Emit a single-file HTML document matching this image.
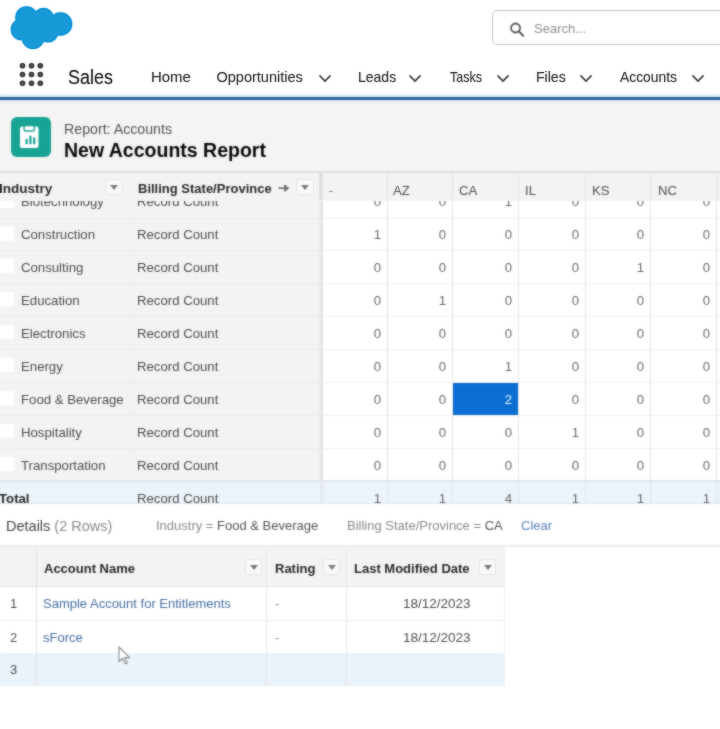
<!DOCTYPE html>
<html><head><meta charset="utf-8">
<style>
*{box-sizing:border-box;margin:0;padding:0}
html,body{width:720px;height:729px;overflow:hidden;background:#fff;font-family:"Liberation Sans",sans-serif;color:#444}
#root{will-change:transform;position:absolute;left:0;top:0;width:720px;height:729px;overflow:hidden}
.abs{position:absolute}
.navi{position:absolute;top:69px;font-size:14.5px;color:#4a4a4a;white-space:nowrap}
.chev{position:absolute;top:73.5px;width:14px;height:9px}
.cell{position:absolute;white-space:nowrap;font-size:13.2px;color:#4e4e4e}
.num{position:absolute;font-size:13.2px;color:#686868;text-align:right}
.hb{font-weight:bold;color:#2a2a2a}
.ddb{position:absolute;border:1px solid #e3e3e3;border-radius:3px;background:#f9f9f9}
.ddb:after{content:"";position:absolute;left:3.5px;top:4.5px;border-left:4.5px solid transparent;border-right:4.5px solid transparent;border-top:5.5px solid #7a7a7a}
</style></head><body><div id="root">
<svg class="abs" style="left:0;top:0" width="80" height="56" viewBox="0 0 80 56">
  <g fill="#1899d8">
    <circle cx="26.5" cy="17.5" r="11.3"/><circle cx="43.5" cy="18" r="10.3"/><circle cx="60.5" cy="24" r="11.8"/>
    <circle cx="21.5" cy="29.5" r="10.8"/><circle cx="33" cy="37.5" r="11.5"/><circle cx="48" cy="32" r="10.5"/><circle cx="40" cy="28" r="14"/>
  </g></svg>
<div class="abs" style="left:492px;top:10px;width:240px;height:35px;border:1.5px solid #cfcfcf;border-radius:5px;background:#fff"></div>
<svg class="abs" style="left:509px;top:22px" width="17" height="16" viewBox="0 0 17 16"><circle cx="6.6" cy="6" r="4.5" fill="none" stroke="#555" stroke-width="1.8"/><line x1="9.9" y1="9.4" x2="14.2" y2="13.8" stroke="#555" stroke-width="2" stroke-linecap="round"/></svg>
<div class="abs" style="left:534px;top:21px;font-size:13px;color:#8f8f8f">Search...</div>
<svg class="abs" style="left:18px;top:61px" width="28" height="28" viewBox="0 0 28 28"><g fill="#4d4d4d"><circle cx="4.5" cy="4.8" r="2.75"/><circle cx="13.5" cy="4.8" r="2.75"/><circle cx="22.3" cy="4.8" r="2.75"/><circle cx="4.5" cy="13.5" r="2.75"/><circle cx="13.5" cy="13.5" r="2.75"/><circle cx="22.3" cy="13.5" r="2.75"/><circle cx="4.5" cy="22.3" r="2.75"/><circle cx="13.5" cy="22.3" r="2.75"/><circle cx="22.3" cy="22.3" r="2.75"/></g></svg>
<div class="abs" style="left:67.5px;top:66px;font-size:19.5px;color:#383838;transform:scaleX(0.92);transform-origin:0 0">Sales</div>

<div class="navi" style="left:151px;transform:scaleX(1.03);transform-origin:0 0">Home</div>
<div class="navi" style="left:216.5px;transform:scaleX(1.0);transform-origin:0 0">Opportunities</div>
<div class="navi" style="left:357.5px;transform:scaleX(0.965);transform-origin:0 0">Leads</div>
<div class="navi" style="left:449.5px;transform:scaleX(0.86);transform-origin:0 0">Tasks</div>
<div class="navi" style="left:536px;transform:scaleX(0.97);transform-origin:0 0">Files</div>
<div class="navi" style="left:620px;transform:scaleX(0.955);transform-origin:0 0">Accounts</div>
<svg class="chev" style="left:318px" viewBox="0 0 14 9"><path d="M1.5 1.5 L7 7 L12.5 1.5" fill="none" stroke="#5a5a5a" stroke-width="1.6"/></svg>
<svg class="chev" style="left:408px" viewBox="0 0 14 9"><path d="M1.5 1.5 L7 7 L12.5 1.5" fill="none" stroke="#5a5a5a" stroke-width="1.6"/></svg>
<svg class="chev" style="left:496px" viewBox="0 0 14 9"><path d="M1.5 1.5 L7 7 L12.5 1.5" fill="none" stroke="#5a5a5a" stroke-width="1.6"/></svg>
<svg class="chev" style="left:579px" viewBox="0 0 14 9"><path d="M1.5 1.5 L7 7 L12.5 1.5" fill="none" stroke="#5a5a5a" stroke-width="1.6"/></svg>
<svg class="chev" style="left:691px" viewBox="0 0 14 9"><path d="M1.5 1.5 L7 7 L12.5 1.5" fill="none" stroke="#5a5a5a" stroke-width="1.6"/></svg>
<div class="abs" style="left:0;top:94px;width:720px;height:3px;background:linear-gradient(#f4fbfd,#cfe9f5)"></div>
<div class="abs" style="left:0;top:97px;width:720px;height:3px;background:#2c659c"></div>
<div class="abs" style="left:0;top:100px;width:720px;height:71px;background:#f4f4f4">
  <div class="abs" style="left:0;top:0;width:720px;height:2px;background:linear-gradient(#d8e6f4,#eef0f2)"></div>
  <div class="abs" style="left:11px;top:17px;width:40px;height:40px;border-radius:6px;background:#18a394"></div>
  <svg class="abs" style="left:11px;top:17px" width="40" height="40" viewBox="0 0 40 40">
    <rect x="9" y="9.5" width="18.5" height="21.5" rx="2" fill="#fff"/>
    <rect x="13" y="8.5" width="10.5" height="5.5" rx="2" fill="#fff" stroke="#18a394" stroke-width="1.3"/>
    <rect x="14.5" y="22" width="2.2" height="5.3" fill="#18a394"/>
    <rect x="18.3" y="18.7" width="2.2" height="8.6" fill="#18a394"/>
    <rect x="22.1" y="20.5" width="2.2" height="6.8" fill="#18a394"/>
  </svg>
  <div class="abs" style="left:64px;top:21px;font-size:14.2px;color:#555;white-space:nowrap">Report: Accounts</div>
  <div class="abs" style="left:64px;top:39px;font-size:19.5px;font-weight:bold;color:#080808;white-space:nowrap">New Accounts Report</div>
</div>

<div class="abs" style="left:0;top:171px;width:720px;height:333px;background:#fff">
<div class="abs" style="left:0;top:0;width:720px;height:2px;background:#e0e0e0"></div>
<div class="abs" style="left:0;top:30px;width:720px;height:303px;overflow:hidden">
<div class="abs" style="left:0;top:0;width:321px;height:304px;background:#f3f3f3"></div>
<div class="abs" style="left:0;top:17px;width:321px;height:1px;background:#eaeaea"></div>
<div class="abs" style="left:322px;top:17px;width:398px;height:1px;background:#f0f0f0"></div>
<div class="abs" style="left:0;top:-7px;width:14px;height:14px;background:#fff"></div>
<div class="cell" style="left:21px;top:-6.75px">Biotechnology</div>
<div class="cell" style="left:137px;top:-6.75px">Record Count</div>
<div class="num" style="left:322px;width:59px;top:-6.75px">0</div>
<div class="num" style="left:387px;width:59px;top:-6.75px">0</div>
<div class="num" style="left:452px;width:60px;top:-6.75px">1</div>
<div class="num" style="left:518px;width:61px;top:-6.75px">0</div>
<div class="num" style="left:585px;width:59px;top:-6.75px">0</div>
<div class="num" style="left:650px;width:60px;top:-6.75px">0</div>
<div class="abs" style="left:0;top:49px;width:321px;height:1px;background:#eaeaea"></div>
<div class="abs" style="left:322px;top:49px;width:398px;height:1px;background:#f0f0f0"></div>
<div class="abs" style="left:0;top:26px;width:14px;height:14px;background:#fff"></div>
<div class="cell" style="left:21px;top:26.0px">Construction</div>
<div class="cell" style="left:137px;top:26.0px">Record Count</div>
<div class="num" style="left:322px;width:59px;top:26.0px">1</div>
<div class="num" style="left:387px;width:59px;top:26.0px">0</div>
<div class="num" style="left:452px;width:60px;top:26.0px">0</div>
<div class="num" style="left:518px;width:61px;top:26.0px">0</div>
<div class="num" style="left:585px;width:59px;top:26.0px">0</div>
<div class="num" style="left:650px;width:60px;top:26.0px">0</div>
<div class="abs" style="left:0;top:82px;width:321px;height:1px;background:#eaeaea"></div>
<div class="abs" style="left:322px;top:82px;width:398px;height:1px;background:#f0f0f0"></div>
<div class="abs" style="left:0;top:58px;width:14px;height:14px;background:#fff"></div>
<div class="cell" style="left:21px;top:58.5px">Consulting</div>
<div class="cell" style="left:137px;top:58.5px">Record Count</div>
<div class="num" style="left:322px;width:59px;top:58.5px">0</div>
<div class="num" style="left:387px;width:59px;top:58.5px">0</div>
<div class="num" style="left:452px;width:60px;top:58.5px">0</div>
<div class="num" style="left:518px;width:61px;top:58.5px">0</div>
<div class="num" style="left:585px;width:59px;top:58.5px">1</div>
<div class="num" style="left:650px;width:60px;top:58.5px">0</div>
<div class="abs" style="left:0;top:115px;width:321px;height:1px;background:#eaeaea"></div>
<div class="abs" style="left:322px;top:115px;width:398px;height:1px;background:#f0f0f0"></div>
<div class="abs" style="left:0;top:91px;width:14px;height:14px;background:#fff"></div>
<div class="cell" style="left:21px;top:91.5px">Education</div>
<div class="cell" style="left:137px;top:91.5px">Record Count</div>
<div class="num" style="left:322px;width:59px;top:91.5px">0</div>
<div class="num" style="left:387px;width:59px;top:91.5px">1</div>
<div class="num" style="left:452px;width:60px;top:91.5px">0</div>
<div class="num" style="left:518px;width:61px;top:91.5px">0</div>
<div class="num" style="left:585px;width:59px;top:91.5px">0</div>
<div class="num" style="left:650px;width:60px;top:91.5px">0</div>
<div class="abs" style="left:0;top:148px;width:321px;height:1px;background:#eaeaea"></div>
<div class="abs" style="left:322px;top:148px;width:398px;height:1px;background:#f0f0f0"></div>
<div class="abs" style="left:0;top:124px;width:14px;height:14px;background:#fff"></div>
<div class="cell" style="left:21px;top:124.5px">Electronics</div>
<div class="cell" style="left:137px;top:124.5px">Record Count</div>
<div class="num" style="left:322px;width:59px;top:124.5px">0</div>
<div class="num" style="left:387px;width:59px;top:124.5px">0</div>
<div class="num" style="left:452px;width:60px;top:124.5px">0</div>
<div class="num" style="left:518px;width:61px;top:124.5px">0</div>
<div class="num" style="left:585px;width:59px;top:124.5px">0</div>
<div class="num" style="left:650px;width:60px;top:124.5px">0</div>
<div class="abs" style="left:0;top:181px;width:321px;height:1px;background:#eaeaea"></div>
<div class="abs" style="left:322px;top:181px;width:398px;height:1px;background:#f0f0f0"></div>
<div class="abs" style="left:0;top:157px;width:14px;height:14px;background:#fff"></div>
<div class="cell" style="left:21px;top:157.5px">Energy</div>
<div class="cell" style="left:137px;top:157.5px">Record Count</div>
<div class="num" style="left:322px;width:59px;top:157.5px">0</div>
<div class="num" style="left:387px;width:59px;top:157.5px">0</div>
<div class="num" style="left:452px;width:60px;top:157.5px">1</div>
<div class="num" style="left:518px;width:61px;top:157.5px">0</div>
<div class="num" style="left:585px;width:59px;top:157.5px">0</div>
<div class="num" style="left:650px;width:60px;top:157.5px">0</div>
<div class="abs" style="left:0;top:214px;width:321px;height:1px;background:#eaeaea"></div>
<div class="abs" style="left:322px;top:214px;width:398px;height:1px;background:#f0f0f0"></div>
<div class="abs" style="left:0;top:190px;width:14px;height:14px;background:#fff"></div>
<div class="cell" style="left:21px;top:190.5px">Food &amp; Beverage</div>
<div class="cell" style="left:137px;top:190.5px">Record Count</div>
<div class="num" style="left:322px;width:59px;top:190.5px">0</div>
<div class="num" style="left:387px;width:59px;top:190.5px">0</div>
<div class="abs" style="left:453px;top:182px;width:65px;height:32px;background:#0b6fd3"></div>
<div class="num" style="left:452px;width:60px;top:190.5px;color:#e6f2ff">2</div>
<div class="num" style="left:518px;width:61px;top:190.5px">0</div>
<div class="num" style="left:585px;width:59px;top:190.5px">0</div>
<div class="num" style="left:650px;width:60px;top:190.5px">0</div>
<div class="abs" style="left:0;top:247px;width:321px;height:1px;background:#eaeaea"></div>
<div class="abs" style="left:322px;top:247px;width:398px;height:1px;background:#f0f0f0"></div>
<div class="abs" style="left:0;top:223px;width:14px;height:14px;background:#fff"></div>
<div class="cell" style="left:21px;top:223.5px">Hospitality</div>
<div class="cell" style="left:137px;top:223.5px">Record Count</div>
<div class="num" style="left:322px;width:59px;top:223.5px">0</div>
<div class="num" style="left:387px;width:59px;top:223.5px">0</div>
<div class="num" style="left:452px;width:60px;top:223.5px">0</div>
<div class="num" style="left:518px;width:61px;top:223.5px">1</div>
<div class="num" style="left:585px;width:59px;top:223.5px">0</div>
<div class="num" style="left:650px;width:60px;top:223.5px">0</div>
<div class="abs" style="left:0;top:280px;width:321px;height:1px;background:#eaeaea"></div>
<div class="abs" style="left:322px;top:280px;width:398px;height:1px;background:#f0f0f0"></div>
<div class="abs" style="left:0;top:256px;width:14px;height:14px;background:#fff"></div>
<div class="cell" style="left:21px;top:256.5px">Transportation</div>
<div class="cell" style="left:137px;top:256.5px">Record Count</div>
<div class="num" style="left:322px;width:59px;top:256.5px">0</div>
<div class="num" style="left:387px;width:59px;top:256.5px">0</div>
<div class="num" style="left:452px;width:60px;top:256.5px">0</div>
<div class="num" style="left:518px;width:61px;top:256.5px">0</div>
<div class="num" style="left:585px;width:59px;top:256.5px">0</div>
<div class="num" style="left:650px;width:60px;top:256.5px">0</div>
<div class="abs" style="left:0;top:279px;width:720px;height:2px;background:#e2e5e8"></div>
<div class="abs" style="left:0;top:281px;width:720px;height:40px;background:#ebf3fb"></div>
<div class="cell hb" style="left:-1px;top:290px">Total</div>
<div class="cell" style="left:137px;top:290px">Record Count</div>
<div class="num" style="left:322px;width:59px;top:290px">1</div>
<div class="num" style="left:387px;width:59px;top:290px">1</div>
<div class="num" style="left:452px;width:60px;top:290px">4</div>
<div class="num" style="left:518px;width:61px;top:290px">1</div>
<div class="num" style="left:585px;width:59px;top:290px">1</div>
<div class="num" style="left:650px;width:60px;top:290px">1</div>
<div class="abs" style="left:322px;top:0;width:1px;height:304px;background:#e3e3e3"></div>
<div class="abs" style="left:387px;top:0;width:1px;height:304px;background:#e3e3e3"></div>
<div class="abs" style="left:452px;top:0;width:1px;height:304px;background:#e3e3e3"></div>
<div class="abs" style="left:518px;top:0;width:1px;height:304px;background:#e3e3e3"></div>
<div class="abs" style="left:585px;top:0;width:1px;height:304px;background:#e3e3e3"></div>
<div class="abs" style="left:650px;top:0;width:1px;height:304px;background:#e3e3e3"></div>
<div class="abs" style="left:716px;top:0;width:1px;height:304px;background:#e3e3e3"></div>
<div class="abs" style="left:130px;top:0;width:1px;height:280px;background:#ececec"></div>
<div class="abs" style="left:319px;top:0;width:3px;height:280px;background:linear-gradient(90deg,#ececec,#e2e2e2)"></div>
<div class="abs" style="left:320px;top:282px;width:1px;height:22px;background:#e0e5ea"></div>
</div>
<div class="abs" style="left:0;top:2px;width:720px;height:28px;background:#f3f3f3"></div>
<div class="cell hb" style="left:-1px;top:10px;font-size:13.5px">Industry</div>
<div class="ddb" style="left:105px;top:8px;width:18px;height:16px"></div>
<div class="cell hb" style="left:138px;top:10px;font-size:13px">Billing State/Province</div>
<svg class="abs" style="left:277px;top:12px" width="14" height="10" viewBox="0 0 14 10"><path d="M1.5 5.2 H9" stroke="#707070" stroke-width="1.7"/><path d="M7.5 1.8 L11.8 5.2 L7.5 8.6 Z" fill="#707070" stroke="#707070" stroke-width="0.8" stroke-linejoin="round"/></svg>
<div class="ddb" style="left:296px;top:8px;width:18px;height:16px"></div>
<div class="cell" style="left:393px;top:11.5px;color:#505050">AZ</div>
<div class="cell" style="left:459px;top:11.5px;color:#505050">CA</div>
<div class="cell" style="left:525px;top:11.5px;color:#505050">IL</div>
<div class="cell" style="left:592px;top:11.5px;color:#505050">KS</div>
<div class="cell" style="left:658px;top:11.5px;color:#505050">NC</div>
<div class="abs" style="left:329px;top:20px;width:4px;height:1px;background:#8a8a8a"></div>
<div class="abs" style="left:322px;top:2px;width:1px;height:27px;background:#e3e3e3"></div>
<div class="abs" style="left:387px;top:2px;width:1px;height:27px;background:#e3e3e3"></div>
<div class="abs" style="left:452px;top:2px;width:1px;height:27px;background:#e3e3e3"></div>
<div class="abs" style="left:518px;top:2px;width:1px;height:27px;background:#e3e3e3"></div>
<div class="abs" style="left:585px;top:2px;width:1px;height:27px;background:#e3e3e3"></div>
<div class="abs" style="left:650px;top:2px;width:1px;height:27px;background:#e3e3e3"></div>
<div class="abs" style="left:716px;top:2px;width:1px;height:27px;background:#e3e3e3"></div>
<div class="abs" style="left:130px;top:2px;width:1px;height:28px;background:#ebebeb"></div>
<div class="abs" style="left:319px;top:2px;width:3px;height:27px;background:#e0e0e0"></div>
</div>
<div class="abs" style="left:0;top:503px;width:720px;height:226px;background:#fff">
  <div class="abs" style="left:0;top:0;width:720px;height:1px;background:#e4e4e4"></div>
  <div class="abs" style="left:6px;top:15px;font-size:14.5px;color:#444;white-space:nowrap">Details <span style="color:#8a8a8a">(2 Rows)</span></div>
  <div class="abs" style="left:156px;top:15px;font-size:13px;color:#8a8a8a;white-space:nowrap">Industry = <span style="color:#555">Food &amp; Beverage</span></div>
  <div class="abs" style="left:347px;top:15px;font-size:13px;color:#8a8a8a;white-space:nowrap">Billing State/Province = <span style="color:#555">CA</span></div>
  <div class="abs" style="left:521px;top:15px;font-size:13px;color:#5a84b8;white-space:nowrap">Clear</div>
  <div class="abs" style="left:0;top:42px;width:720px;height:2px;background:#ececec"></div>
  <div class="abs" style="left:0;top:44px;width:504px;height:39px;background:#f3f3f3"></div>
  <div class="abs" style="left:0;top:83px;width:504px;height:1px;background:#e2e2e2"></div>
  <div class="abs" style="left:0;top:117px;width:504px;height:1px;background:#ededed"></div>
  <div class="abs" style="left:0;top:150px;width:504px;height:33px;background:#eaf2fa"></div>
  <div class="abs" style="left:36px;top:44px;width:1px;height:139px;background:#e2e2e2"></div>
  <div class="abs" style="left:266px;top:44px;width:1px;height:139px;background:#e8e8e8"></div>
  <div class="abs" style="left:346px;top:44px;width:1px;height:139px;background:#e8e8e8"></div>
  <div class="abs" style="left:504px;top:44px;width:1px;height:139px;background:#f0f0f0"></div>
  <div class="cell hb" style="left:44px;top:58px;font-size:13px">Account Name</div>
  <div class="ddb" style="left:245px;top:56px;width:17px;height:16px"></div>
  <div class="cell hb" style="left:275px;top:58px;font-size:13px">Rating</div>
  <div class="ddb" style="left:323px;top:56px;width:17px;height:16px"></div>
  <div class="cell hb" style="left:354px;top:58px;font-size:13px">Last Modified Date</div>
  <div class="ddb" style="left:479px;top:56px;width:17px;height:16px"></div>
  <div class="cell" style="left:10px;top:93px;font-size:13px">1</div>
  <div class="cell" style="left:10px;top:127px;font-size:13px">2</div>
  <div class="cell" style="left:10px;top:159px;font-size:13px">3</div>
  <div class="cell" style="left:43px;top:93px;font-size:13px;color:#4670a3">Sample Account for Entitlements</div>
  <div class="cell" style="left:43px;top:127px;font-size:13px;color:#4670a3">sForce</div>
  <div class="cell" style="left:275px;top:93px;font-size:13px;color:#888">-</div>
  <div class="cell" style="left:275px;top:127px;font-size:13px;color:#888">-</div>
  <div class="cell" style="left:403px;top:93px;font-size:13.5px">18/12/2023</div>
  <div class="cell" style="left:403px;top:127px;font-size:13.5px">18/12/2023</div>
</div>
<svg class="abs" style="left:117px;top:645.5px" width="16" height="22" viewBox="0 0 16 22"><path d="M2 1 L2 15.5 L5.5 12.3 L8.3 18 L10.3 17.1 L7.6 11.6 L12.6 11.6 Z" fill="#fff" stroke="#8a8a8a" stroke-width="1.1" stroke-linejoin="round"/></svg>
</div><div id="root2" style="position:absolute;left:0;top:0;width:720px;height:729px;overflow:hidden;filter:blur(1px);opacity:0.5"><svg class="abs" style="left:0;top:0" width="80" height="56" viewBox="0 0 80 56">
  <g fill="#1899d8">
    <circle cx="26.5" cy="17.5" r="11.3"/><circle cx="43.5" cy="18" r="10.3"/><circle cx="60.5" cy="24" r="11.8"/>
    <circle cx="21.5" cy="29.5" r="10.8"/><circle cx="33" cy="37.5" r="11.5"/><circle cx="48" cy="32" r="10.5"/><circle cx="40" cy="28" r="14"/>
  </g></svg>
<div class="abs" style="left:492px;top:10px;width:240px;height:35px;border:1.5px solid #cfcfcf;border-radius:5px;background:#fff"></div>
<svg class="abs" style="left:509px;top:22px" width="17" height="16" viewBox="0 0 17 16"><circle cx="6.6" cy="6" r="4.5" fill="none" stroke="#555" stroke-width="1.8"/><line x1="9.9" y1="9.4" x2="14.2" y2="13.8" stroke="#555" stroke-width="2" stroke-linecap="round"/></svg>
<div class="abs" style="left:534px;top:21px;font-size:13px;color:#8f8f8f">Search...</div>
<svg class="abs" style="left:18px;top:61px" width="28" height="28" viewBox="0 0 28 28"><g fill="#4d4d4d"><circle cx="4.5" cy="4.8" r="2.75"/><circle cx="13.5" cy="4.8" r="2.75"/><circle cx="22.3" cy="4.8" r="2.75"/><circle cx="4.5" cy="13.5" r="2.75"/><circle cx="13.5" cy="13.5" r="2.75"/><circle cx="22.3" cy="13.5" r="2.75"/><circle cx="4.5" cy="22.3" r="2.75"/><circle cx="13.5" cy="22.3" r="2.75"/><circle cx="22.3" cy="22.3" r="2.75"/></g></svg>
<div class="abs" style="left:67.5px;top:66px;font-size:19.5px;color:#383838;transform:scaleX(0.92);transform-origin:0 0">Sales</div>

<div class="navi" style="left:151px;transform:scaleX(1.03);transform-origin:0 0">Home</div>
<div class="navi" style="left:216.5px;transform:scaleX(1.0);transform-origin:0 0">Opportunities</div>
<div class="navi" style="left:357.5px;transform:scaleX(0.965);transform-origin:0 0">Leads</div>
<div class="navi" style="left:449.5px;transform:scaleX(0.86);transform-origin:0 0">Tasks</div>
<div class="navi" style="left:536px;transform:scaleX(0.97);transform-origin:0 0">Files</div>
<div class="navi" style="left:620px;transform:scaleX(0.955);transform-origin:0 0">Accounts</div>
<svg class="chev" style="left:318px" viewBox="0 0 14 9"><path d="M1.5 1.5 L7 7 L12.5 1.5" fill="none" stroke="#5a5a5a" stroke-width="1.6"/></svg>
<svg class="chev" style="left:408px" viewBox="0 0 14 9"><path d="M1.5 1.5 L7 7 L12.5 1.5" fill="none" stroke="#5a5a5a" stroke-width="1.6"/></svg>
<svg class="chev" style="left:496px" viewBox="0 0 14 9"><path d="M1.5 1.5 L7 7 L12.5 1.5" fill="none" stroke="#5a5a5a" stroke-width="1.6"/></svg>
<svg class="chev" style="left:579px" viewBox="0 0 14 9"><path d="M1.5 1.5 L7 7 L12.5 1.5" fill="none" stroke="#5a5a5a" stroke-width="1.6"/></svg>
<svg class="chev" style="left:691px" viewBox="0 0 14 9"><path d="M1.5 1.5 L7 7 L12.5 1.5" fill="none" stroke="#5a5a5a" stroke-width="1.6"/></svg>
<div class="abs" style="left:0;top:94px;width:720px;height:3px;background:linear-gradient(#f4fbfd,#cfe9f5)"></div>
<div class="abs" style="left:0;top:97px;width:720px;height:3px;background:#2c659c"></div>
<div class="abs" style="left:0;top:100px;width:720px;height:71px;background:#f4f4f4">
  <div class="abs" style="left:0;top:0;width:720px;height:2px;background:linear-gradient(#d8e6f4,#eef0f2)"></div>
  <div class="abs" style="left:11px;top:17px;width:40px;height:40px;border-radius:6px;background:#18a394"></div>
  <svg class="abs" style="left:11px;top:17px" width="40" height="40" viewBox="0 0 40 40">
    <rect x="9" y="9.5" width="18.5" height="21.5" rx="2" fill="#fff"/>
    <rect x="13" y="8.5" width="10.5" height="5.5" rx="2" fill="#fff" stroke="#18a394" stroke-width="1.3"/>
    <rect x="14.5" y="22" width="2.2" height="5.3" fill="#18a394"/>
    <rect x="18.3" y="18.7" width="2.2" height="8.6" fill="#18a394"/>
    <rect x="22.1" y="20.5" width="2.2" height="6.8" fill="#18a394"/>
  </svg>
  <div class="abs" style="left:64px;top:21px;font-size:14.2px;color:#555;white-space:nowrap">Report: Accounts</div>
  <div class="abs" style="left:64px;top:39px;font-size:19.5px;font-weight:bold;color:#080808;white-space:nowrap">New Accounts Report</div>
</div>

<div class="abs" style="left:0;top:171px;width:720px;height:333px;background:#fff">
<div class="abs" style="left:0;top:0;width:720px;height:2px;background:#e0e0e0"></div>
<div class="abs" style="left:0;top:30px;width:720px;height:303px;overflow:hidden">
<div class="abs" style="left:0;top:0;width:321px;height:304px;background:#f3f3f3"></div>
<div class="abs" style="left:0;top:17px;width:321px;height:1px;background:#eaeaea"></div>
<div class="abs" style="left:322px;top:17px;width:398px;height:1px;background:#f0f0f0"></div>
<div class="abs" style="left:0;top:-7px;width:14px;height:14px;background:#fff"></div>
<div class="cell" style="left:21px;top:-6.75px">Biotechnology</div>
<div class="cell" style="left:137px;top:-6.75px">Record Count</div>
<div class="num" style="left:322px;width:59px;top:-6.75px">0</div>
<div class="num" style="left:387px;width:59px;top:-6.75px">0</div>
<div class="num" style="left:452px;width:60px;top:-6.75px">1</div>
<div class="num" style="left:518px;width:61px;top:-6.75px">0</div>
<div class="num" style="left:585px;width:59px;top:-6.75px">0</div>
<div class="num" style="left:650px;width:60px;top:-6.75px">0</div>
<div class="abs" style="left:0;top:49px;width:321px;height:1px;background:#eaeaea"></div>
<div class="abs" style="left:322px;top:49px;width:398px;height:1px;background:#f0f0f0"></div>
<div class="abs" style="left:0;top:26px;width:14px;height:14px;background:#fff"></div>
<div class="cell" style="left:21px;top:26.0px">Construction</div>
<div class="cell" style="left:137px;top:26.0px">Record Count</div>
<div class="num" style="left:322px;width:59px;top:26.0px">1</div>
<div class="num" style="left:387px;width:59px;top:26.0px">0</div>
<div class="num" style="left:452px;width:60px;top:26.0px">0</div>
<div class="num" style="left:518px;width:61px;top:26.0px">0</div>
<div class="num" style="left:585px;width:59px;top:26.0px">0</div>
<div class="num" style="left:650px;width:60px;top:26.0px">0</div>
<div class="abs" style="left:0;top:82px;width:321px;height:1px;background:#eaeaea"></div>
<div class="abs" style="left:322px;top:82px;width:398px;height:1px;background:#f0f0f0"></div>
<div class="abs" style="left:0;top:58px;width:14px;height:14px;background:#fff"></div>
<div class="cell" style="left:21px;top:58.5px">Consulting</div>
<div class="cell" style="left:137px;top:58.5px">Record Count</div>
<div class="num" style="left:322px;width:59px;top:58.5px">0</div>
<div class="num" style="left:387px;width:59px;top:58.5px">0</div>
<div class="num" style="left:452px;width:60px;top:58.5px">0</div>
<div class="num" style="left:518px;width:61px;top:58.5px">0</div>
<div class="num" style="left:585px;width:59px;top:58.5px">1</div>
<div class="num" style="left:650px;width:60px;top:58.5px">0</div>
<div class="abs" style="left:0;top:115px;width:321px;height:1px;background:#eaeaea"></div>
<div class="abs" style="left:322px;top:115px;width:398px;height:1px;background:#f0f0f0"></div>
<div class="abs" style="left:0;top:91px;width:14px;height:14px;background:#fff"></div>
<div class="cell" style="left:21px;top:91.5px">Education</div>
<div class="cell" style="left:137px;top:91.5px">Record Count</div>
<div class="num" style="left:322px;width:59px;top:91.5px">0</div>
<div class="num" style="left:387px;width:59px;top:91.5px">1</div>
<div class="num" style="left:452px;width:60px;top:91.5px">0</div>
<div class="num" style="left:518px;width:61px;top:91.5px">0</div>
<div class="num" style="left:585px;width:59px;top:91.5px">0</div>
<div class="num" style="left:650px;width:60px;top:91.5px">0</div>
<div class="abs" style="left:0;top:148px;width:321px;height:1px;background:#eaeaea"></div>
<div class="abs" style="left:322px;top:148px;width:398px;height:1px;background:#f0f0f0"></div>
<div class="abs" style="left:0;top:124px;width:14px;height:14px;background:#fff"></div>
<div class="cell" style="left:21px;top:124.5px">Electronics</div>
<div class="cell" style="left:137px;top:124.5px">Record Count</div>
<div class="num" style="left:322px;width:59px;top:124.5px">0</div>
<div class="num" style="left:387px;width:59px;top:124.5px">0</div>
<div class="num" style="left:452px;width:60px;top:124.5px">0</div>
<div class="num" style="left:518px;width:61px;top:124.5px">0</div>
<div class="num" style="left:585px;width:59px;top:124.5px">0</div>
<div class="num" style="left:650px;width:60px;top:124.5px">0</div>
<div class="abs" style="left:0;top:181px;width:321px;height:1px;background:#eaeaea"></div>
<div class="abs" style="left:322px;top:181px;width:398px;height:1px;background:#f0f0f0"></div>
<div class="abs" style="left:0;top:157px;width:14px;height:14px;background:#fff"></div>
<div class="cell" style="left:21px;top:157.5px">Energy</div>
<div class="cell" style="left:137px;top:157.5px">Record Count</div>
<div class="num" style="left:322px;width:59px;top:157.5px">0</div>
<div class="num" style="left:387px;width:59px;top:157.5px">0</div>
<div class="num" style="left:452px;width:60px;top:157.5px">1</div>
<div class="num" style="left:518px;width:61px;top:157.5px">0</div>
<div class="num" style="left:585px;width:59px;top:157.5px">0</div>
<div class="num" style="left:650px;width:60px;top:157.5px">0</div>
<div class="abs" style="left:0;top:214px;width:321px;height:1px;background:#eaeaea"></div>
<div class="abs" style="left:322px;top:214px;width:398px;height:1px;background:#f0f0f0"></div>
<div class="abs" style="left:0;top:190px;width:14px;height:14px;background:#fff"></div>
<div class="cell" style="left:21px;top:190.5px">Food &amp; Beverage</div>
<div class="cell" style="left:137px;top:190.5px">Record Count</div>
<div class="num" style="left:322px;width:59px;top:190.5px">0</div>
<div class="num" style="left:387px;width:59px;top:190.5px">0</div>
<div class="abs" style="left:453px;top:182px;width:65px;height:32px;background:#0b6fd3"></div>
<div class="num" style="left:452px;width:60px;top:190.5px;color:#e6f2ff">2</div>
<div class="num" style="left:518px;width:61px;top:190.5px">0</div>
<div class="num" style="left:585px;width:59px;top:190.5px">0</div>
<div class="num" style="left:650px;width:60px;top:190.5px">0</div>
<div class="abs" style="left:0;top:247px;width:321px;height:1px;background:#eaeaea"></div>
<div class="abs" style="left:322px;top:247px;width:398px;height:1px;background:#f0f0f0"></div>
<div class="abs" style="left:0;top:223px;width:14px;height:14px;background:#fff"></div>
<div class="cell" style="left:21px;top:223.5px">Hospitality</div>
<div class="cell" style="left:137px;top:223.5px">Record Count</div>
<div class="num" style="left:322px;width:59px;top:223.5px">0</div>
<div class="num" style="left:387px;width:59px;top:223.5px">0</div>
<div class="num" style="left:452px;width:60px;top:223.5px">0</div>
<div class="num" style="left:518px;width:61px;top:223.5px">1</div>
<div class="num" style="left:585px;width:59px;top:223.5px">0</div>
<div class="num" style="left:650px;width:60px;top:223.5px">0</div>
<div class="abs" style="left:0;top:280px;width:321px;height:1px;background:#eaeaea"></div>
<div class="abs" style="left:322px;top:280px;width:398px;height:1px;background:#f0f0f0"></div>
<div class="abs" style="left:0;top:256px;width:14px;height:14px;background:#fff"></div>
<div class="cell" style="left:21px;top:256.5px">Transportation</div>
<div class="cell" style="left:137px;top:256.5px">Record Count</div>
<div class="num" style="left:322px;width:59px;top:256.5px">0</div>
<div class="num" style="left:387px;width:59px;top:256.5px">0</div>
<div class="num" style="left:452px;width:60px;top:256.5px">0</div>
<div class="num" style="left:518px;width:61px;top:256.5px">0</div>
<div class="num" style="left:585px;width:59px;top:256.5px">0</div>
<div class="num" style="left:650px;width:60px;top:256.5px">0</div>
<div class="abs" style="left:0;top:279px;width:720px;height:2px;background:#e2e5e8"></div>
<div class="abs" style="left:0;top:281px;width:720px;height:40px;background:#ebf3fb"></div>
<div class="cell hb" style="left:-1px;top:290px">Total</div>
<div class="cell" style="left:137px;top:290px">Record Count</div>
<div class="num" style="left:322px;width:59px;top:290px">1</div>
<div class="num" style="left:387px;width:59px;top:290px">1</div>
<div class="num" style="left:452px;width:60px;top:290px">4</div>
<div class="num" style="left:518px;width:61px;top:290px">1</div>
<div class="num" style="left:585px;width:59px;top:290px">1</div>
<div class="num" style="left:650px;width:60px;top:290px">1</div>
<div class="abs" style="left:322px;top:0;width:1px;height:304px;background:#e3e3e3"></div>
<div class="abs" style="left:387px;top:0;width:1px;height:304px;background:#e3e3e3"></div>
<div class="abs" style="left:452px;top:0;width:1px;height:304px;background:#e3e3e3"></div>
<div class="abs" style="left:518px;top:0;width:1px;height:304px;background:#e3e3e3"></div>
<div class="abs" style="left:585px;top:0;width:1px;height:304px;background:#e3e3e3"></div>
<div class="abs" style="left:650px;top:0;width:1px;height:304px;background:#e3e3e3"></div>
<div class="abs" style="left:716px;top:0;width:1px;height:304px;background:#e3e3e3"></div>
<div class="abs" style="left:130px;top:0;width:1px;height:280px;background:#ececec"></div>
<div class="abs" style="left:319px;top:0;width:3px;height:280px;background:linear-gradient(90deg,#ececec,#e2e2e2)"></div>
<div class="abs" style="left:320px;top:282px;width:1px;height:22px;background:#e0e5ea"></div>
</div>
<div class="abs" style="left:0;top:2px;width:720px;height:28px;background:#f3f3f3"></div>
<div class="cell hb" style="left:-1px;top:10px;font-size:13.5px">Industry</div>
<div class="ddb" style="left:105px;top:8px;width:18px;height:16px"></div>
<div class="cell hb" style="left:138px;top:10px;font-size:13px">Billing State/Province</div>
<svg class="abs" style="left:277px;top:12px" width="14" height="10" viewBox="0 0 14 10"><path d="M1.5 5.2 H9" stroke="#707070" stroke-width="1.7"/><path d="M7.5 1.8 L11.8 5.2 L7.5 8.6 Z" fill="#707070" stroke="#707070" stroke-width="0.8" stroke-linejoin="round"/></svg>
<div class="ddb" style="left:296px;top:8px;width:18px;height:16px"></div>
<div class="cell" style="left:393px;top:11.5px;color:#505050">AZ</div>
<div class="cell" style="left:459px;top:11.5px;color:#505050">CA</div>
<div class="cell" style="left:525px;top:11.5px;color:#505050">IL</div>
<div class="cell" style="left:592px;top:11.5px;color:#505050">KS</div>
<div class="cell" style="left:658px;top:11.5px;color:#505050">NC</div>
<div class="abs" style="left:329px;top:20px;width:4px;height:1px;background:#8a8a8a"></div>
<div class="abs" style="left:322px;top:2px;width:1px;height:27px;background:#e3e3e3"></div>
<div class="abs" style="left:387px;top:2px;width:1px;height:27px;background:#e3e3e3"></div>
<div class="abs" style="left:452px;top:2px;width:1px;height:27px;background:#e3e3e3"></div>
<div class="abs" style="left:518px;top:2px;width:1px;height:27px;background:#e3e3e3"></div>
<div class="abs" style="left:585px;top:2px;width:1px;height:27px;background:#e3e3e3"></div>
<div class="abs" style="left:650px;top:2px;width:1px;height:27px;background:#e3e3e3"></div>
<div class="abs" style="left:716px;top:2px;width:1px;height:27px;background:#e3e3e3"></div>
<div class="abs" style="left:130px;top:2px;width:1px;height:28px;background:#ebebeb"></div>
<div class="abs" style="left:319px;top:2px;width:3px;height:27px;background:#e0e0e0"></div>
</div>
<div class="abs" style="left:0;top:503px;width:720px;height:226px;background:#fff">
  <div class="abs" style="left:0;top:0;width:720px;height:1px;background:#e4e4e4"></div>
  <div class="abs" style="left:6px;top:15px;font-size:14.5px;color:#444;white-space:nowrap">Details <span style="color:#8a8a8a">(2 Rows)</span></div>
  <div class="abs" style="left:156px;top:15px;font-size:13px;color:#8a8a8a;white-space:nowrap">Industry = <span style="color:#555">Food &amp; Beverage</span></div>
  <div class="abs" style="left:347px;top:15px;font-size:13px;color:#8a8a8a;white-space:nowrap">Billing State/Province = <span style="color:#555">CA</span></div>
  <div class="abs" style="left:521px;top:15px;font-size:13px;color:#5a84b8;white-space:nowrap">Clear</div>
  <div class="abs" style="left:0;top:42px;width:720px;height:2px;background:#ececec"></div>
  <div class="abs" style="left:0;top:44px;width:504px;height:39px;background:#f3f3f3"></div>
  <div class="abs" style="left:0;top:83px;width:504px;height:1px;background:#e2e2e2"></div>
  <div class="abs" style="left:0;top:117px;width:504px;height:1px;background:#ededed"></div>
  <div class="abs" style="left:0;top:150px;width:504px;height:33px;background:#eaf2fa"></div>
  <div class="abs" style="left:36px;top:44px;width:1px;height:139px;background:#e2e2e2"></div>
  <div class="abs" style="left:266px;top:44px;width:1px;height:139px;background:#e8e8e8"></div>
  <div class="abs" style="left:346px;top:44px;width:1px;height:139px;background:#e8e8e8"></div>
  <div class="abs" style="left:504px;top:44px;width:1px;height:139px;background:#f0f0f0"></div>
  <div class="cell hb" style="left:44px;top:58px;font-size:13px">Account Name</div>
  <div class="ddb" style="left:245px;top:56px;width:17px;height:16px"></div>
  <div class="cell hb" style="left:275px;top:58px;font-size:13px">Rating</div>
  <div class="ddb" style="left:323px;top:56px;width:17px;height:16px"></div>
  <div class="cell hb" style="left:354px;top:58px;font-size:13px">Last Modified Date</div>
  <div class="ddb" style="left:479px;top:56px;width:17px;height:16px"></div>
  <div class="cell" style="left:10px;top:93px;font-size:13px">1</div>
  <div class="cell" style="left:10px;top:127px;font-size:13px">2</div>
  <div class="cell" style="left:10px;top:159px;font-size:13px">3</div>
  <div class="cell" style="left:43px;top:93px;font-size:13px;color:#4670a3">Sample Account for Entitlements</div>
  <div class="cell" style="left:43px;top:127px;font-size:13px;color:#4670a3">sForce</div>
  <div class="cell" style="left:275px;top:93px;font-size:13px;color:#888">-</div>
  <div class="cell" style="left:275px;top:127px;font-size:13px;color:#888">-</div>
  <div class="cell" style="left:403px;top:93px;font-size:13.5px">18/12/2023</div>
  <div class="cell" style="left:403px;top:127px;font-size:13.5px">18/12/2023</div>
</div>
<svg class="abs" style="left:117px;top:645.5px" width="16" height="22" viewBox="0 0 16 22"><path d="M2 1 L2 15.5 L5.5 12.3 L8.3 18 L10.3 17.1 L7.6 11.6 L12.6 11.6 Z" fill="#fff" stroke="#8a8a8a" stroke-width="1.1" stroke-linejoin="round"/></svg>
</div></body></html>
